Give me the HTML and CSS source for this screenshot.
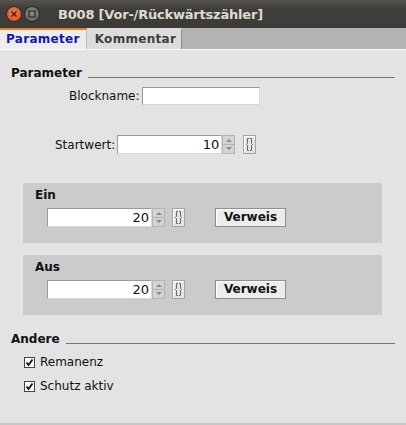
FILE: index.html
```html
<!DOCTYPE html>
<html>
<head>
<meta charset="utf-8">
<link rel="stylesheet" href="styles.css">
</head>
<body>
<div class="window">
  <div class="titlebar">
    <span class="wbtn close"><svg width="14" height="14" viewBox="0 0 14 14"><path d="M4.5 4.5L9.5 9.5M9.5 4.5L4.5 9.5" stroke="#3a1a10" stroke-width="1.4"/></svg></span>
    <span class="wbtn mini"><svg width="14" height="14" viewBox="0 0 14 14"><rect x="4" y="4" width="6" height="6" fill="none" stroke="#2e2e2e" stroke-width="1.2"/></svg></span>
    <span class="title">B008 [Vor-/Rückwärtszähler]</span>
  </div>
  <div class="tabs">
    <div class="tab active">Parameter</div>
    <div class="tab">Kommentar</div>
  </div>
  <div class="content">
    <div class="section-head"><span>Parameter</span><span class="rule"></span></div>
    <div class="row blockname"><label>Blockname:</label><span class="input text"></span></div>
    <div class="row startwert">
      <label>Startwert:</label>
      <span class="input num">10</span>
      <span class="spin"><span class="up"></span><span class="down"></span></span>
      <span class="ref"><svg width="13" height="19" viewBox="0 0 13 19"><path d="M6 3.5H4.5V8.5L3.5 9.5L4.5 10.5V15.5H6M7 3.5H8.5V8.5L9.5 9.5L8.5 10.5V15.5H7" stroke="#666" stroke-width="1" fill="none"/></svg></span>
    </div>
    <div class="group">
      <div class="group-title">Ein</div>
      <div class="group-row">
        <span class="input num">20</span>
        <span class="spin"><span class="up"></span><span class="down"></span></span>
        <span class="ref"><svg width="13" height="19" viewBox="0 0 13 19"><path d="M6 3.5H4.5V8.5L3.5 9.5L4.5 10.5V15.5H6M7 3.5H8.5V8.5L9.5 9.5L8.5 10.5V15.5H7" stroke="#666" stroke-width="1" fill="none"/></svg></span>
        <span class="btn">Verweis</span>
      </div>
    </div>
    <div class="group">
      <div class="group-title">Aus</div>
      <div class="group-row">
        <span class="input num">20</span>
        <span class="spin"><span class="up"></span><span class="down"></span></span>
        <span class="ref"><svg width="13" height="19" viewBox="0 0 13 19"><path d="M6 3.5H4.5V8.5L3.5 9.5L4.5 10.5V15.5H6M7 3.5H8.5V8.5L9.5 9.5L8.5 10.5V15.5H7" stroke="#666" stroke-width="1" fill="none"/></svg></span>
        <span class="btn">Verweis</span>
      </div>
    </div>
    <div class="section-head andere"><span>Andere</span><span class="rule"></span></div>
    <div class="check"><span class="box"><svg width="11" height="11" viewBox="0 0 11 11"><path d="M2.5 5.5L4.5 8L8.5 2.5" stroke="#111" stroke-width="1.8" fill="none"/></svg></span>Remanenz</div>
    <div class="check"><span class="box"><svg width="11" height="11" viewBox="0 0 11 11"><path d="M2.5 5.5L4.5 8L8.5 2.5" stroke="#111" stroke-width="1.8" fill="none"/></svg></span>Schutz aktiv</div>
  </div>
</div>
</body>
</html>
```
FILE: styles.css
```css
html, body {
  margin: 0;
  padding: 0;
  width: 406px;
  height: 425px;
  overflow: hidden;
  background: #e3e3e3;
  font-family: "DejaVu Sans", Verdana, sans-serif;
  font-size: 12px;
  color: #111;
}
.window {
  width: 406px;
  height: 425px;
  display: flex;
  flex-direction: column;
}
.titlebar {
  height: 28px;
  flex: none;
  background: linear-gradient(#57554f, #3f3e3a 30%, #3c3b37);
  display: flex;
  align-items: center;
  padding-left: 7px;
  box-sizing: border-box;
}
.wbtn {
  width: 14px;
  height: 14px;
  border-radius: 50%;
  display: inline-flex;
  margin-right: 4px;
}
.wbtn.close {
  background: radial-gradient(circle at 50% 40%, #f47a4f, #df4b16);
  box-shadow: 0 0 0 1px #2d2c28;
}
.wbtn.mini {
  background: radial-gradient(circle at 50% 40%, #8a8984, #5f5e59);
  box-shadow: 0 0 0 1px #2d2c28;
}
.title {
  margin-left: 15px;
  color: #dfdbd2;
  font-weight: bold;
  font-size: 13px;
  letter-spacing: -0.2px;
}
.tabs {
  height: 21px;
  flex: none;
  display: flex;
  background: #b3b3b3;
  border-bottom: 1px solid #fbfbfb;
}
.tab {
  font-weight: bold;
  font-size: 12px;
  line-height: 19px;
  padding: 0 5px 0 6px;
  background: #dcdcdc;
  color: #3c3c3c;
  border-right: 1px solid #8f8f8f;
  border-top: 2px solid transparent;
  letter-spacing: 0.3px;
}
.tab.active {
  background: #ededed;
  color: #1515b8;
  border-top-color: #f07a22;
  border-right: 1px solid #bdbdbd;
  padding: 0 6px 0 6px;
}
.tab:not(.active) {
  padding: 0 5px 0 8px;
}
.content {
  flex: 1;
  background: #e3e3e3;
  padding: 15px 11px 0 11px;
  border-bottom: 2px solid #c8c8c8;
}
.section-head {
  display: flex;
  align-items: center;
  font-weight: bold;
  height: 16px;
}
.section-head .rule {
  flex: 1;
  height: 1px;
  background: #777;
  margin-left: 6px;
  align-self: flex-end;
  margin-bottom: 3px;
}
.row {
  display: flex;
  align-items: center;
}
.row label {
  margin-right: 2px;
}
.blockname {
  margin-top: 6px;
  padding-left: 58px;
}
.startwert {
  margin-top: 30px;
  padding-left: 44px;
}
.input {
  background: #fff;
  border: 1px solid #9a9a9a;
  border-right-color: #d8d8d8;
  border-bottom-color: #d8d8d8;
  box-sizing: border-box;
  display: inline-block;
}
.input.text {
  width: 118px;
  height: 18px;
}
.input.num {
  width: 105px;
  height: 19px;
  text-align: right;
  font-size: 13px;
  line-height: 17px;
  padding-right: 2px;
}
.spin {
  display: inline-flex;
  flex-direction: column;
  width: 13px;
  height: 19px;
}
.spin span {
  flex: 1;
  background: #d3d3d3;
  border: 1px solid #b4b4b4;
  position: relative;
}
.spin .up { border-bottom: none; }
.spin .up::after, .spin .down::after {
  content: "";
  position: absolute;
  left: 3px;
  top: 3px;
  border-left: 3px solid transparent;
  border-right: 3px solid transparent;
}
.spin .up::after { border-bottom: 3px solid #8a8a8a; }
.spin .down::after { border-top: 3px solid #8a8a8a; top: 2px; }
.ref {
  display: inline-flex;
  width: 13px;
  height: 19px;
  margin-left: 8px;
  box-sizing: border-box;
  border: 1px solid #a5a5a5;
  background: #e4e4e4;
  box-shadow: inset 1px 1px 0 #fff;
}
.ref svg { margin: -1px; }
.group {
  margin: 0 13px 0 12px;
  background: #cbcbcb;
  height: 60px;
  box-sizing: border-box;
  padding: 4px 0 0 12px;
}
.startwert + .group { margin-top: 29px; }
.group + .group { margin-top: 12px; }
.group-title {
  font-weight: bold;
  height: 17px;
  line-height: 17px;
}
.group-row {
  display: flex;
  align-items: center;
  margin-top: 4px;
  padding-left: 12px;
}
.group-row .ref { margin-left: 7px; }
.btn {
  margin-left: 30px;
  width: 71px;
  height: 19px;
  box-sizing: border-box;
  border: 1px solid #8d8d8d;
  background: #ececec;
  box-shadow: inset 1px 1px 0 #fff;
  font-weight: bold;
  font-size: 12px;
  line-height: 17px;
  text-align: center;
}
.andere {
  margin-top: 16px;
}
.check {
  display: flex;
  align-items: center;
  padding-left: 13px;
  height: 24px;
}
.andere + .check { margin-top: 3px; }
.box {
  width: 11px;
  height: 11px;
  box-sizing: border-box;
  background: #fff;
  border: 1px solid #444;
  margin-right: 5px;
  display: inline-flex;
}
.box svg { margin: -1px; }
```
